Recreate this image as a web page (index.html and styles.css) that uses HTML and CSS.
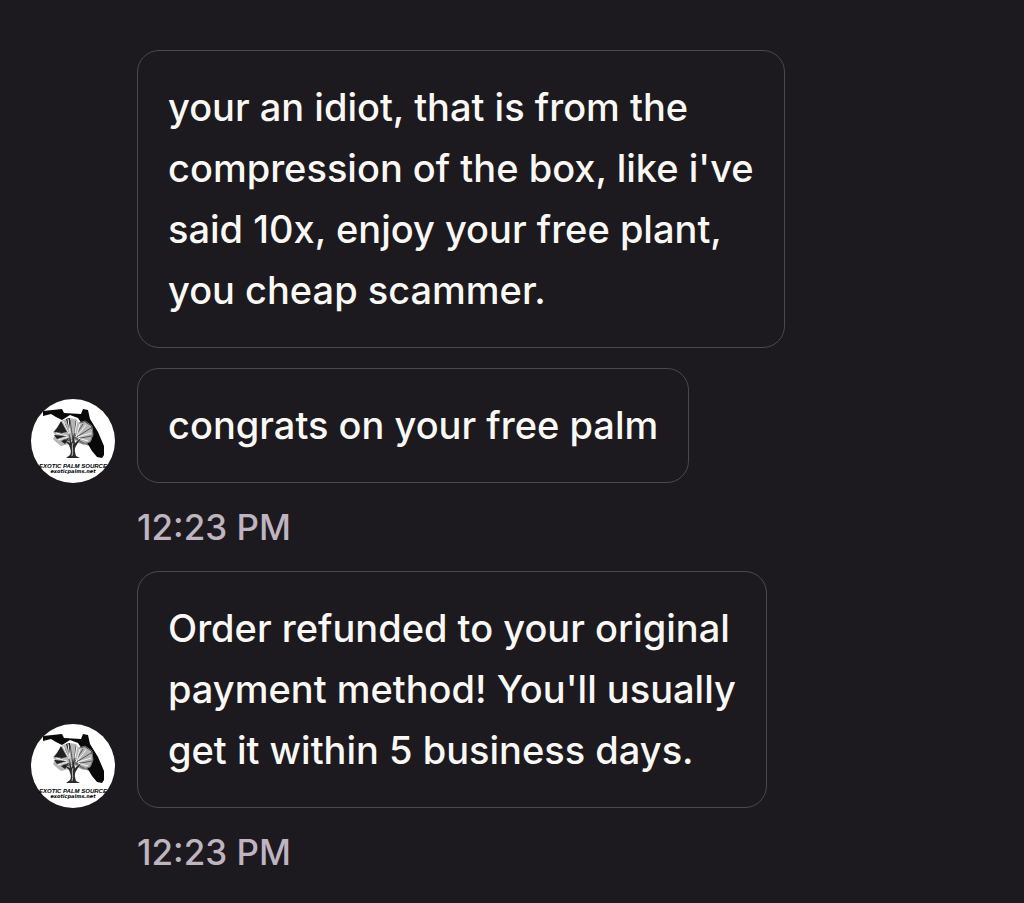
FILE: index.html
```
<!DOCTYPE html>
<html lang="en">
<head>
<meta charset="utf-8">
<meta name="viewport" content="width=device-width, initial-scale=1">
<title>Messages</title>
<link rel="stylesheet" href="styles.css">
</head>
<body>
<svg class="defs" aria-hidden="true">
  <defs>
    <symbol id="shop-logo" viewBox="0 0 84 84">
      <circle cx="42" cy="42" r="42" fill="#fff"/>
      <path d="M12 12l19-2 2 4 17 1 2-5 5 1 2 9 8 13 6 14v9l-2 3-5-1-5-6-3-5-4-5-1-14-6-9-8-3-8 5-6-3-5-3-8 2z" fill="#090909"/>
      <path d="M28 26l4-5 6-2 7 1 3 4 6-1 6 4 2 8-2 7-6 4-7-2-5-4-4 5-8 2-5-4-3-3 2-4-2-3z" fill="#b5b5b5"/>
      <path d="M26 29l4-7 6 11-5 1-8-1zM23 36l12 1-9 3zM30 42l8-3-4 6zM35 20l4-1v14z" fill="#202020"/>
      <path d="M42 41l-3-20M43 40l2-18M43 39l9-14M44 39l16-10M44 40l17-3M45 40l12 6M40 41l-6-16M39 41l-11-8M39 42l-9-3" fill="none" stroke="#555" stroke-width="1"/>
      <path d="M32 22l6 13M37 20l2 14M46 22l-2 12M49 25l-4 13M55 26l-8 10M60 34l-13 4M57 42l-10-3M25 34l11 3M27 41l10-3" fill="none" stroke="#f4f4f4" stroke-width="1"/>
      <path d="M48 24l6-2 7 5 1 9-3 7-7 2-5-3" fill="none" stroke="#777" stroke-width="1"/>
      <path d="M38 37l3 7 1-10 2 10 6-5-5 8c-2 3-1 6 0 10l4 2H35l4-3c2-4 0-7-1-10l-5-5 6 3z" fill="#2b2b2b"/>
      <path d="M42 44c-2 4 1 8-1 13" fill="none" stroke="#bbb" stroke-width="1"/>
      <text class="logo-name" x="42" y="69" text-anchor="middle">EXOTIC PALM SOURCE</text>
      <text class="logo-site" x="42" y="74" text-anchor="middle">exoticpalms.net</text>
    </symbol>
  </defs>
</svg>
<main class="chat">
  <section class="group">
    <p class="bubble">your an idiot, that is from the<br>compression of the box, like i've<br>said 10x, enjoy your free plant,<br>you cheap scammer.</p>
    <svg class="avatar" role="img" aria-label="Exotic Palm Source"><use href="#shop-logo"/></svg>
    <p class="bubble">congrats on your free palm</p>
    <time class="time" datetime="12:23">12:23 PM</time>
  </section>
  <section class="group">
    <svg class="avatar" role="img" aria-label="Exotic Palm Source"><use href="#shop-logo"/></svg>
    <p class="bubble">Order refunded to your original<br>payment method! You'll usually<br>get it within 5 business days.</p>
    <time class="time" datetime="12:23">12:23 PM</time>
  </section>
</main>
</body>
</html>
```
FILE: styles.css
```
* {
  box-sizing: border-box;
}

body {
  margin: 0;
  background: #1c1a1e;
  color: #faf8f5;
  font-family: Inter, "Liberation Sans", sans-serif;
  font-weight: 500;
}

.defs {
  display: block;
  width: 0;
  height: 0;
}

.chat {
  display: flex;
  flex-direction: column;
  gap: 20px;
  padding: 50px 31px 28px;
}

.group {
  display: grid;
  grid-template-columns: 84px minmax(0, 1fr);
  column-gap: 22px;
  row-gap: 20px;
}

.avatar {
  grid-column: 1;
  align-self: end;
  width: 84px;
  height: 84px;
}

.bubble {
  grid-column: 2;
  justify-self: start;
  margin: 0;
  padding: 26px 30px;
  border: 1px solid #4b484e;
  border-radius: 22px;
  font-size: 38px;
  line-height: 61px;
}

.time {
  grid-column: 2;
  color: #bfb4c0;
  font-size: 35px;
  line-height: 48px;
}

.logo-name {
  font: italic 700 6px "Liberation Sans", sans-serif;
}

.logo-site {
  font: italic 700 5px "DejaVu Sans", sans-serif;
}
```
